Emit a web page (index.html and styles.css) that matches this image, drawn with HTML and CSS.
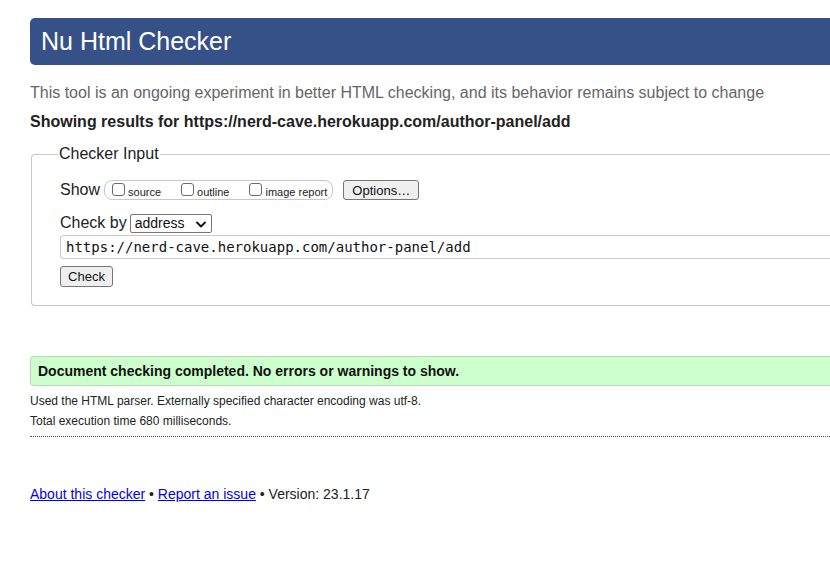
FILE: index.html
```html
<!DOCTYPE html>
<html lang="en">
<head>
<meta charset="utf-8">
<title>Nu Html Checker</title>
<link rel="stylesheet" href="styles.css">
</head>
<body>
<div class="page">
  <h1 class="header">Nu Html Checker</h1>
  <p class="intro">This tool is an ongoing experiment in better HTML checking, and its behavior remains subject to change</p>
  <p class="showing">Showing results for https://nerd-cave.herokuapp.com/author-panel/add</p>

  <fieldset class="checker">
    <legend class="legend">Checker Input</legend>
    <div class="row show-row">
      <span class="row-label">Show</span>
      <span class="pill">
        <label class="opt"><span class="box"></span>source</label>
        <label class="opt"><span class="box"></span>outline</label>
        <label class="opt"><span class="box"></span>image report</label>
      </span>
      <span class="btn options">Options…</span>
    </div>
    <div class="row by-row">
      <span class="row-label">Check by</span>
      <span class="select">address
        <svg class="chev" width="10" height="7" viewBox="0 0 10 7"><path d="M1 1.5 L5 5.5 L9 1.5" fill="none" stroke="#111" stroke-width="1.8" stroke-linecap="round" stroke-linejoin="round"/></svg>
      </span>
    </div>
    <div class="url">https://nerd-cave.herokuapp.com/author-panel/add</div>
    <div class="row check-row"><span class="btn check">Check</span></div>
  </fieldset>

  <div class="success">Document checking completed. No errors or warnings to show.</div>
  <p class="meta">Used the HTML parser. Externally specified character encoding was utf-8.</p>
  <p class="meta">Total execution time 680 milliseconds.</p>
  <hr class="dotted">

  <p class="footer"><a href="#">About this checker</a> • <a href="#">Report an issue</a> • Version: 23.1.17</p>
</div>
</body>
</html>
```

FILE: styles.css
```css
html, body {
  margin: 0;
  padding: 0;
  background: #fff;
  overflow: hidden;
}
body {
  font-family: "Liberation Sans", Arial, sans-serif;
  color: #222;
}
.page {
  padding: 18px 0 0 30px;
}
.header {
  margin: 0;
  height: 47px;
  box-sizing: border-box;
  background: #365187;
  color: #fff;
  font-weight: normal;
  font-size: 25px;
  line-height: 47px;
  padding-left: 11px;
  border-radius: 5px 0 0 5px;
}
.intro {
  margin: 18px 0 0;
  font-size: 16px;
  line-height: 20px;
  color: #666;
}
.showing {
  margin: 9px 0 0;
  font-size: 16px;
  line-height: 20px;
  font-weight: bold;
  color: #222;
}
.checker {
  margin: 13px 0 0 1px;
  border: 1px solid #c8c8c8;
  border-right: none;
  border-radius: 4px 0 0 4px;
  padding: 17px 0 18px 26px;
  min-width: 0;
}
.legend {
  padding: 0 1px;
  font-size: 16px;
  color: #222;
}
.row {
  display: flex;
  align-items: center;
  margin-left: 2px;
}
.row-label {
  font-size: 16px;
  line-height: 20px;
}
.show-row {
  height: 20px;
}
.pill {
  display: flex;
  align-items: center;
  height: 20px;
  box-sizing: border-box;
  margin-left: 4px;
  border: 1px solid #c8c8c8;
  border-radius: 8px;
  padding: 0 5px 0 7px;
}
.opt {
  display: flex;
  align-items: center;
  font-size: 11px;
  margin-right: 20px;
  padding-top: 3px;
}
.opt:last-child {
  margin-right: 0;
}
.box {
  width: 11px;
  height: 11px;
  border: 1px solid #6b6b6b;
  border-radius: 3px;
  margin-right: 3px;
  position: relative;
  top: -2px;
}
.btn {
  display: inline-flex;
  align-items: center;
  justify-content: center;
  box-sizing: border-box;
  background: #efefef;
  border: 1px solid #767676;
  border-radius: 3px;
  font-size: 13px;
  color: #111;
}
.options {
  margin-left: 10px;
  width: 76px;
  height: 20px;
}
.by-row {
  margin-top: 13px;
  height: 20px;
}
.select {
  display: inline-flex;
  align-items: center;
  position: relative;
  margin-left: 3px;
  width: 82px;
  height: 19px;
  box-sizing: border-box;
  border: 1px solid #767676;
  border-radius: 2px;
  padding-left: 4px;
  font-size: 14px;
  color: #111;
}
.chev {
  position: absolute;
  right: 5px;
  top: 6px;
}
.url {
  margin: 2px 0 0 2px;
  height: 24px;
  box-sizing: border-box;
  border: 1px solid #c8c8c8;
  border-right: none;
  border-radius: 4px 0 0 4px;
  padding-left: 5px;
  font-family: "DejaVu Sans Mono", Menlo, monospace;
  font-size: 14px;
  line-height: 22px;
  color: #111;
}
.check-row {
  margin-top: 7px;
}
.check {
  width: 53px;
  height: 21px;
  font-size: 13px;
}
.success {
  margin-top: 50px;
  height: 30px;
  box-sizing: border-box;
  background: #ccffcc;
  border: 1px solid #b5dcb5;
  border-right: none;
  border-radius: 4px 0 0 4px;
  padding-left: 7px;
  font-size: 14px;
  font-weight: bold;
  line-height: 28px;
  color: #111;
}
.meta {
  margin: 8px 0 0;
  font-size: 12px;
  line-height: 14px;
  color: #222;
}
.meta + .meta {
  margin-top: 6px;
}
.dotted {
  margin: 8px 0 0;
  border: none;
  border-top: 1px dotted #555;
  height: 0;
}
.footer {
  margin: 48px 0 0;
  font-size: 14px;
  line-height: 18px;
  color: #222;
}
.footer a {
  color: #0000ee;
}
```
